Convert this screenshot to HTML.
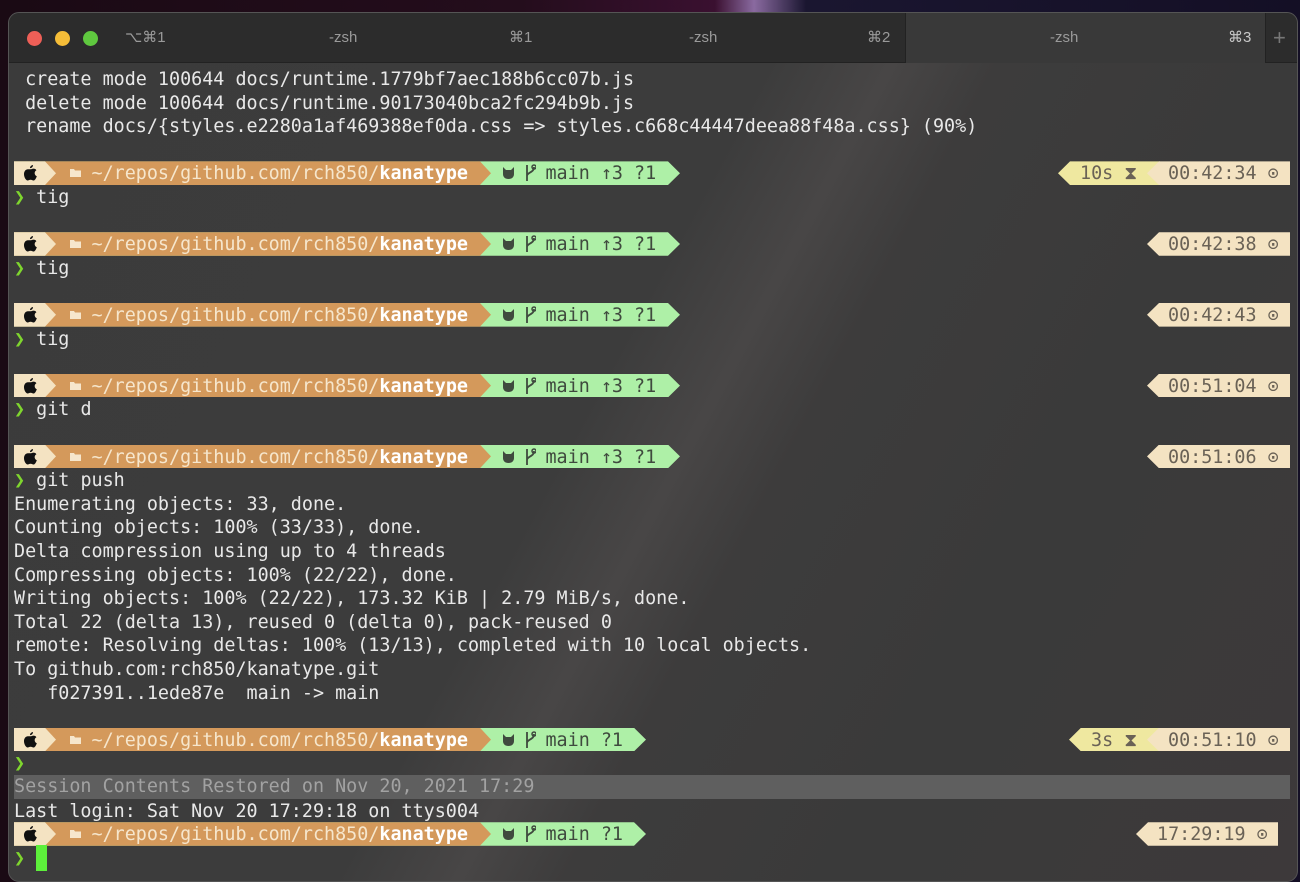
<!DOCTYPE html>
<html><head><meta charset="utf-8"><style>
*{margin:0;padding:0;box-sizing:border-box}
body{width:1300px;height:869px;overflow:hidden;background:linear-gradient(90deg,#1a0a14 0%,#240d1c 40%,#3a1030 55%,#8a6aa0 58%,#1a1630 62%,#140f25 100%);position:relative;font-family:"DejaVu Sans Mono","Liberation Mono",monospace;font-size:18.4px}
.win{position:absolute;left:8px;top:12px;width:1290px;height:870px;border-radius:11px;background:linear-gradient(118deg,#3b3b3b 0%,#3c3c3c 45%,#484646 52%,#3d3c3c 58%,#3a3a3a 75%,#3d393a 100%);overflow:hidden;border:1px solid #555}
.tb{position:absolute;left:0;top:0;width:100%;height:50px;background:#2c2c2c;border-bottom:1px solid #222}
.tab{position:absolute;top:0;height:50px;line-height:50px;color:#9a9a9a;font-family:"Liberation Sans",sans-serif;font-size:15px}
.act{background:#393939;border-left:1px solid #222;border-right:1px solid #222}
.dot{position:absolute;top:18px;width:15px;height:15px;border-radius:50%}
.sh{position:absolute;left:0;top:2px;width:1300px;height:869px}
.t{position:absolute;left:14px;height:23.6px;line-height:23.6px;white-space:pre;color:#e8e8e8}
.seg{position:absolute;top:-1px;height:23.6px}
.c{background:#f4e3c2;width:42px;left:14px;clip-path:polygon(0 0,31px 0,42px 50%,31px 100%,0 100%)}
.o{background:#d4995b;width:477px;left:14px;clip-path:polygon(0 0,466px 0,477px 50%,466px 100%,0 100%)}
.g{background:#aef0a7;width:666px;left:14px;clip-path:polygon(0 0,654px 0,666px 50%,654px 100%,0 100%)}
.gs{background:#aef0a7;width:632px;left:14px;clip-path:polygon(0 0,620px 0,632px 50%,620px 100%,0 100%)}
.rc{background:#f4e3c2;clip-path:polygon(12px 0,100% 0,100% 100%,12px 100%,0 50%)}
.ry{background:#efe8a0;clip-path:polygon(12px 0,100% 0,100% 100%,12px 100%,0 50%)}
.pt{color:#f6e6cc}.pt b{color:#fff;font-weight:bold}
.gt{color:#3f4a3e}
.rt{color:#6a6256}
.ch{color:#7fd62e}
svg{position:absolute}
</style></head><body>
<div class="win">
<div class="tb">
<div class="dot" style="left:18px;background:#ee5f57"></div>
<div class="dot" style="left:46px;background:#f5bd38"></div>
<div class="dot" style="left:74px;background:#5fc83f"></div>
<div class="tab" style="left:116px">⌥⌘1</div>
<div class="tab" style="left:320px">-zsh</div>
<div class="tab" style="left:500px">⌘1</div>
<div class="tab" style="left:680px">-zsh</div>
<div class="tab" style="left:858px">⌘2</div>
<div class="tab act" style="left:896px;width:361px"><span style="position:absolute;left:144px">-zsh</span><span style="position:absolute;left:322px;color:#c8c8c8">⌘3</span></div>
<div class="tab" style="left:1264px;color:#777;font-size:22px">+</div>
</div>
</div>
<div class="sh">
<div class="t" style="top:66px"> create mode 100644 docs/runtime.1779bf7aec188b6cc07b.js</div>
<div class="t" style="top:89.6px"> delete mode 100644 docs/runtime.90173040bca2fc294b9b.js</div>
<div class="t" style="top:113.2px"> rename docs/{styles.e2280a1af469388ef0da.css => styles.c668c44447deea88f48a.css} (90%)</div>

<div style="position:absolute;left:0;top:160.4px;width:1300px;height:24px">
<div class="seg g"></div><div class="seg o"></div><div class="seg c"></div>
<div class="t pt" style="top:0">       ~/repos/github.com/rch850/<b>kanatype</b><span class="gt">       main ↑3 ?1</span></div>
<svg style="left:23px;top:3px" width="15" height="16" viewBox="0 0 15 16"><path d="M10 0c0 2-1.5 3.2-3 3.1C7 1.5 8.4.2 10 0zM7.5 4.3c.8 0 1.8-.7 3-.7 1.2 0 2.3.6 2.9 1.6-2.6 1.5-2.1 5 .4 6-.6 1.8-1.8 4.3-3.3 4.3-1.1 0-1.5-.7-2.9-.7s-1.9.7-2.9.7C3.1 15.5 1 12.3 1 9.2 1 6.1 3 4.3 4.8 4.3c1.1 0 2 0 2.7 0z" fill="#111"/></svg>
<svg style="left:70px;top:6px" width="12" height="10"><path d="M0 1h4l1 1.5h6V9H0z" fill="#f6e6cc"/></svg>
<svg style="left:502px;top:5px" width="13" height="12"><path d="M1 0l3 3h5l3-3v7c0 3-2 5-5.5 5S1 10 1 7z" fill="#3f4a3e"/></svg>
<svg style="left:524px;top:2px" width="12" height="18"><path d="M3 1v16M3 12c0-4 7-3 7-9" stroke="#3f4a3e" stroke-width="1.8" fill="none"/><circle cx="10" cy="3" r="2" fill="none" stroke="#3f4a3e" stroke-width="1.5"/></svg>
<div class="seg ry" style="left:1058px;width:102px"></div><div class="seg rc" style="left:1147px;width:143px"></div>
<div class="t rt" style="left:1080px;top:0">10s ⧗</div><div class="t rt" style="left:1168px;top:0">00:42:34 ⊙</div>
</div>

<div style="position:absolute;left:0;top:231.2px;width:1300px;height:24px">
<div class="seg g"></div><div class="seg o"></div><div class="seg c"></div>
<div class="t pt" style="top:0">       ~/repos/github.com/rch850/<b>kanatype</b><span class="gt">       main ↑3 ?1</span></div>
<svg style="left:23px;top:3px" width="15" height="16" viewBox="0 0 15 16"><path d="M10 0c0 2-1.5 3.2-3 3.1C7 1.5 8.4.2 10 0zM7.5 4.3c.8 0 1.8-.7 3-.7 1.2 0 2.3.6 2.9 1.6-2.6 1.5-2.1 5 .4 6-.6 1.8-1.8 4.3-3.3 4.3-1.1 0-1.5-.7-2.9-.7s-1.9.7-2.9.7C3.1 15.5 1 12.3 1 9.2 1 6.1 3 4.3 4.8 4.3c1.1 0 2 0 2.7 0z" fill="#111"/></svg>
<svg style="left:70px;top:6px" width="12" height="10"><path d="M0 1h4l1 1.5h6V9H0z" fill="#f6e6cc"/></svg>
<svg style="left:502px;top:5px" width="13" height="12"><path d="M1 0l3 3h5l3-3v7c0 3-2 5-5.5 5S1 10 1 7z" fill="#3f4a3e"/></svg>
<svg style="left:524px;top:2px" width="12" height="18"><path d="M3 1v16M3 12c0-4 7-3 7-9" stroke="#3f4a3e" stroke-width="1.8" fill="none"/><circle cx="10" cy="3" r="2" fill="none" stroke="#3f4a3e" stroke-width="1.5"/></svg>
<div class="seg rc" style="left:1147px;width:143px"></div>
<div class="t rt" style="left:1168px;top:0">00:42:38 ⊙</div>
</div>

<div style="position:absolute;left:0;top:302px;width:1300px;height:24px">
<div class="seg g"></div><div class="seg o"></div><div class="seg c"></div>
<div class="t pt" style="top:0">       ~/repos/github.com/rch850/<b>kanatype</b><span class="gt">       main ↑3 ?1</span></div>
<svg style="left:23px;top:3px" width="15" height="16" viewBox="0 0 15 16"><path d="M10 0c0 2-1.5 3.2-3 3.1C7 1.5 8.4.2 10 0zM7.5 4.3c.8 0 1.8-.7 3-.7 1.2 0 2.3.6 2.9 1.6-2.6 1.5-2.1 5 .4 6-.6 1.8-1.8 4.3-3.3 4.3-1.1 0-1.5-.7-2.9-.7s-1.9.7-2.9.7C3.1 15.5 1 12.3 1 9.2 1 6.1 3 4.3 4.8 4.3c1.1 0 2 0 2.7 0z" fill="#111"/></svg>
<svg style="left:70px;top:6px" width="12" height="10"><path d="M0 1h4l1 1.5h6V9H0z" fill="#f6e6cc"/></svg>
<svg style="left:502px;top:5px" width="13" height="12"><path d="M1 0l3 3h5l3-3v7c0 3-2 5-5.5 5S1 10 1 7z" fill="#3f4a3e"/></svg>
<svg style="left:524px;top:2px" width="12" height="18"><path d="M3 1v16M3 12c0-4 7-3 7-9" stroke="#3f4a3e" stroke-width="1.8" fill="none"/><circle cx="10" cy="3" r="2" fill="none" stroke="#3f4a3e" stroke-width="1.5"/></svg>
<div class="seg rc" style="left:1147px;width:143px"></div>
<div class="t rt" style="left:1168px;top:0">00:42:43 ⊙</div>
</div>

<div style="position:absolute;left:0;top:372.8px;width:1300px;height:24px">
<div class="seg g"></div><div class="seg o"></div><div class="seg c"></div>
<div class="t pt" style="top:0">       ~/repos/github.com/rch850/<b>kanatype</b><span class="gt">       main ↑3 ?1</span></div>
<svg style="left:23px;top:3px" width="15" height="16" viewBox="0 0 15 16"><path d="M10 0c0 2-1.5 3.2-3 3.1C7 1.5 8.4.2 10 0zM7.5 4.3c.8 0 1.8-.7 3-.7 1.2 0 2.3.6 2.9 1.6-2.6 1.5-2.1 5 .4 6-.6 1.8-1.8 4.3-3.3 4.3-1.1 0-1.5-.7-2.9-.7s-1.9.7-2.9.7C3.1 15.5 1 12.3 1 9.2 1 6.1 3 4.3 4.8 4.3c1.1 0 2 0 2.7 0z" fill="#111"/></svg>
<svg style="left:70px;top:6px" width="12" height="10"><path d="M0 1h4l1 1.5h6V9H0z" fill="#f6e6cc"/></svg>
<svg style="left:502px;top:5px" width="13" height="12"><path d="M1 0l3 3h5l3-3v7c0 3-2 5-5.5 5S1 10 1 7z" fill="#3f4a3e"/></svg>
<svg style="left:524px;top:2px" width="12" height="18"><path d="M3 1v16M3 12c0-4 7-3 7-9" stroke="#3f4a3e" stroke-width="1.8" fill="none"/><circle cx="10" cy="3" r="2" fill="none" stroke="#3f4a3e" stroke-width="1.5"/></svg>
<div class="seg rc" style="left:1147px;width:143px"></div>
<div class="t rt" style="left:1168px;top:0">00:51:04 ⊙</div>
</div>

<div style="position:absolute;left:0;top:443.6px;width:1300px;height:24px">
<div class="seg g"></div><div class="seg o"></div><div class="seg c"></div>
<div class="t pt" style="top:0">       ~/repos/github.com/rch850/<b>kanatype</b><span class="gt">       main ↑3 ?1</span></div>
<svg style="left:23px;top:3px" width="15" height="16" viewBox="0 0 15 16"><path d="M10 0c0 2-1.5 3.2-3 3.1C7 1.5 8.4.2 10 0zM7.5 4.3c.8 0 1.8-.7 3-.7 1.2 0 2.3.6 2.9 1.6-2.6 1.5-2.1 5 .4 6-.6 1.8-1.8 4.3-3.3 4.3-1.1 0-1.5-.7-2.9-.7s-1.9.7-2.9.7C3.1 15.5 1 12.3 1 9.2 1 6.1 3 4.3 4.8 4.3c1.1 0 2 0 2.7 0z" fill="#111"/></svg>
<svg style="left:70px;top:6px" width="12" height="10"><path d="M0 1h4l1 1.5h6V9H0z" fill="#f6e6cc"/></svg>
<svg style="left:502px;top:5px" width="13" height="12"><path d="M1 0l3 3h5l3-3v7c0 3-2 5-5.5 5S1 10 1 7z" fill="#3f4a3e"/></svg>
<svg style="left:524px;top:2px" width="12" height="18"><path d="M3 1v16M3 12c0-4 7-3 7-9" stroke="#3f4a3e" stroke-width="1.8" fill="none"/><circle cx="10" cy="3" r="2" fill="none" stroke="#3f4a3e" stroke-width="1.5"/></svg>
<div class="seg rc" style="left:1147px;width:143px"></div>
<div class="t rt" style="left:1168px;top:0">00:51:06 ⊙</div>
</div>

<div style="position:absolute;left:0;top:726.8px;width:1300px;height:24px">
<div class="seg gs"></div><div class="seg o"></div><div class="seg c"></div>
<div class="t pt" style="top:0">       ~/repos/github.com/rch850/<b>kanatype</b><span class="gt">       main ?1</span></div>
<svg style="left:23px;top:3px" width="15" height="16" viewBox="0 0 15 16"><path d="M10 0c0 2-1.5 3.2-3 3.1C7 1.5 8.4.2 10 0zM7.5 4.3c.8 0 1.8-.7 3-.7 1.2 0 2.3.6 2.9 1.6-2.6 1.5-2.1 5 .4 6-.6 1.8-1.8 4.3-3.3 4.3-1.1 0-1.5-.7-2.9-.7s-1.9.7-2.9.7C3.1 15.5 1 12.3 1 9.2 1 6.1 3 4.3 4.8 4.3c1.1 0 2 0 2.7 0z" fill="#111"/></svg>
<svg style="left:70px;top:6px" width="12" height="10"><path d="M0 1h4l1 1.5h6V9H0z" fill="#f6e6cc"/></svg>
<svg style="left:502px;top:5px" width="13" height="12"><path d="M1 0l3 3h5l3-3v7c0 3-2 5-5.5 5S1 10 1 7z" fill="#3f4a3e"/></svg>
<svg style="left:524px;top:2px" width="12" height="18"><path d="M3 1v16M3 12c0-4 7-3 7-9" stroke="#3f4a3e" stroke-width="1.8" fill="none"/><circle cx="10" cy="3" r="2" fill="none" stroke="#3f4a3e" stroke-width="1.5"/></svg>
<div class="seg ry" style="left:1069px;width:91px"></div><div class="seg rc" style="left:1147px;width:143px"></div>
<div class="t rt" style="left:1091px;top:0">3s ⧗</div><div class="t rt" style="left:1168px;top:0">00:51:10 ⊙</div>
</div>

<div style="position:absolute;left:0;top:821.2px;width:1300px;height:24px">
<div class="seg gs"></div><div class="seg o"></div><div class="seg c"></div>
<div class="t pt" style="top:0">       ~/repos/github.com/rch850/<b>kanatype</b><span class="gt">       main ?1</span></div>
<svg style="left:23px;top:3px" width="15" height="16" viewBox="0 0 15 16"><path d="M10 0c0 2-1.5 3.2-3 3.1C7 1.5 8.4.2 10 0zM7.5 4.3c.8 0 1.8-.7 3-.7 1.2 0 2.3.6 2.9 1.6-2.6 1.5-2.1 5 .4 6-.6 1.8-1.8 4.3-3.3 4.3-1.1 0-1.5-.7-2.9-.7s-1.9.7-2.9.7C3.1 15.5 1 12.3 1 9.2 1 6.1 3 4.3 4.8 4.3c1.1 0 2 0 2.7 0z" fill="#111"/></svg>
<svg style="left:70px;top:6px" width="12" height="10"><path d="M0 1h4l1 1.5h6V9H0z" fill="#f6e6cc"/></svg>
<svg style="left:502px;top:5px" width="13" height="12"><path d="M1 0l3 3h5l3-3v7c0 3-2 5-5.5 5S1 10 1 7z" fill="#3f4a3e"/></svg>
<svg style="left:524px;top:2px" width="12" height="18"><path d="M3 1v16M3 12c0-4 7-3 7-9" stroke="#3f4a3e" stroke-width="1.8" fill="none"/><circle cx="10" cy="3" r="2" fill="none" stroke="#3f4a3e" stroke-width="1.5"/></svg>
<div class="seg rc" style="left:1136px;width:142px"></div>
<div class="t rt" style="left:1157px;top:0">17:29:19 ⊙</div>
</div>

<div class="t" style="top:184px"><span class="ch">❯</span> tig</div>
<div class="t" style="top:254.8px"><span class="ch">❯</span> tig</div>
<div class="t" style="top:325.6px"><span class="ch">❯</span> tig</div>
<div class="t" style="top:396.4px"><span class="ch">❯</span> git d</div>
<div class="t" style="top:467.2px"><span class="ch">❯</span> git push</div>
<div class="t" style="top:490.8px">Enumerating objects: 33, done.</div>
<div class="t" style="top:514.4px">Counting objects: 100% (33/33), done.</div>
<div class="t" style="top:538px">Delta compression using up to 4 threads</div>
<div class="t" style="top:561.6px">Compressing objects: 100% (22/22), done.</div>
<div class="t" style="top:585.2px">Writing objects: 100% (22/22), 173.32 KiB | 2.79 MiB/s, done.</div>
<div class="t" style="top:608.8px">Total 22 (delta 13), reused 0 (delta 0), pack-reused 0</div>
<div class="t" style="top:632.4px">remote: Resolving deltas: 100% (13/13), completed with 10 local objects.</div>
<div class="t" style="top:656px">To github.com:rch850/kanatype.git</div>
<div class="t" style="top:679.6px">   f027391..1ede87e  main -> main</div>
<div class="t" style="top:750.4px"><span class="ch">❯</span></div>
<div class="t" style="top:773px;width:1276px;background:#5f5f5f;color:#a2a2a2">Session Contents Restored on Nov 20, 2021 17:29</div>
<div class="t" style="top:797.6px">Last login: Sat Nov 20 17:29:18 on ttys004</div>
<div class="t" style="top:844.8px"><span class="ch">❯</span></div>
<div style="position:absolute;left:36px;top:843px;width:11px;height:26px;background:#5df03b"></div>
</div>
</body></html>
